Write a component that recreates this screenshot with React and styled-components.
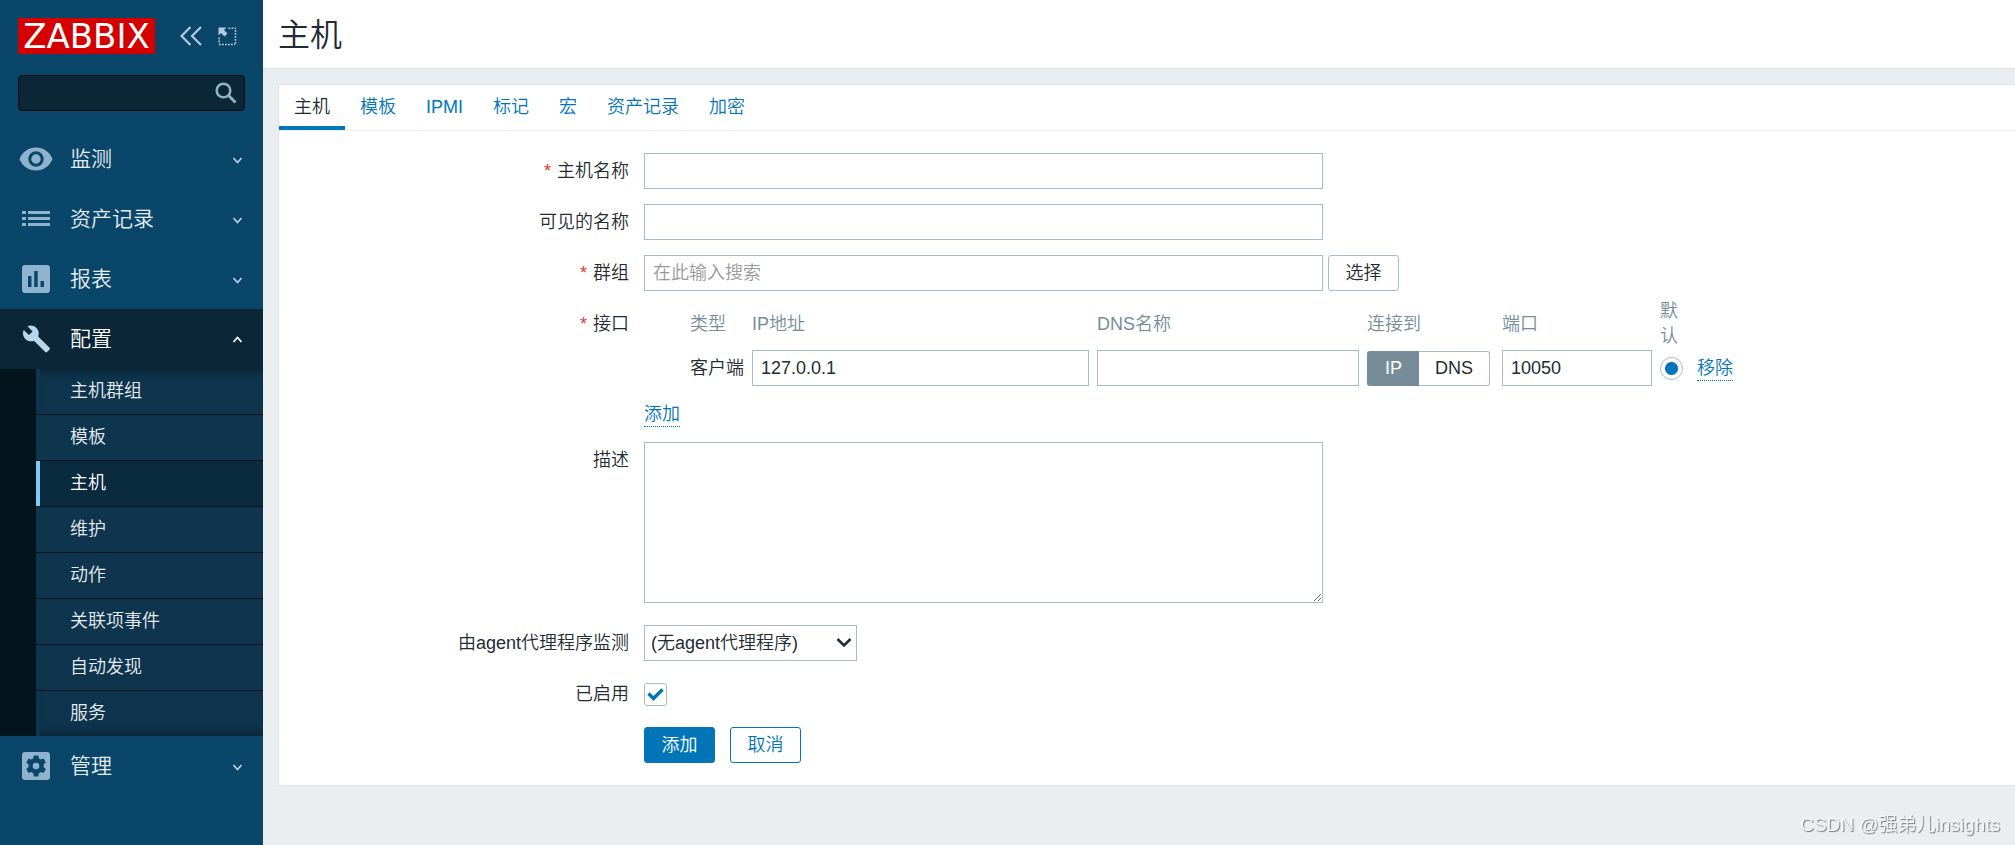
import React, { useState } from 'react'
import styled, { createGlobalStyle, css } from 'styled-components'

const GlobalStyle = createGlobalStyle`
    * {
        box-sizing: border-box;
    }

    body {
        margin: 0;
        background-color: #ebeef0;
        color: #1f2c33;
        font-family: "Liberation Sans", "Noto Sans CJK SC", sans-serif;
        font-size: 18px;
        font-weight: 350;
        line-height: 24px;
    }

    button,
    input,
    select,
    textarea {
        font: inherit;
        color: inherit;
    }
`

const Layout = styled.div`
    display: flex;
    min-height: 100vh;
`

const Sidebar = styled.aside`
    flex: 0 0 263px;
    min-width: 0;
    background-color: #0a466a;
`

const SidebarTop = styled.div`
    display: flex;
    align-items: center;
    padding: 18px 18px 0;
    color: #b3cbdc;
`

const Logo = styled.a`
    flex: none;
    width: 137px;
    margin-right: 25px;
    background-color: #d40000;
    color: #fff;
    font-family: "DejaVu Sans", sans-serif;
    font-size: 34px;
    font-weight: 400;
    line-height: 36px;
    text-align: center;
    text-decoration: none;
`

const IconButton = styled.button`
    display: flex;
    flex: none;
    padding: 0;
    border: none;
    background: none;
    color: inherit;
    cursor: pointer;

    & + & {
        margin-left: 15px;
    }
`

const Search = styled.form`
    display: flex;
    align-items: center;
    height: 36px;
    margin: 21px 18px 18px;
    padding-right: 7px;
    border: 1px solid #020a0f;
    border-radius: 4px;
    background-color: #0a2637;
    color: #8fb0c6;

    input {
        flex: 1;
        width: 100%;
        min-width: 0;
        padding: 0 9px;
        border: none;
        outline: none;
        background: none;
        color: #fff;
    }
`

const Menu = styled.ul`
    margin: 0;
    padding: 0;
    list-style: none;
`

const MenuLink = styled.a`
    display: grid;
    grid-template-columns: 36px 1fr 15px;
    align-items: center;
    column-gap: 16px;
    height: 60px;
    padding: 0 18px;
    color: #e6edf2;
    font-size: 21px;
    text-decoration: none;

    svg {
        justify-self: center;
        color: #8fb3cd;
    }

    svg:last-child {
        color: #bccfdb;
    }

    ${({ $open }) => $open && css`
        background-color: #0a2637;
        color: #fff;

        svg {
            color: #b8d6ec;
        }

        svg:last-child {
            color: #fff;
        }
    `}
`

const SubMenu = styled.ul`
    margin: 0;
    padding: 0 0 0 36px;
    list-style: none;
    background-color: #04141d;

    li + li {
        border-top: 1px solid #04141d;
    }

    li:first-child a {
        box-shadow: inset 0 9px 9px -6px #0a2637;
    }

    li:last-child a {
        box-shadow: inset 0 -9px 9px -6px #0a2637;
    }
`

const SubLink = styled.a`
    display: block;
    padding-left: 30px;
    border-left: 4px solid ${({ $active }) => ($active ? '#7ecbff' : '#0f344d')};
    background-color: ${({ $active }) => ($active ? '#0a2a3e' : '#0f344d')};
    color: ${({ $active }) => ($active ? '#fff' : '#e6edf2')};
    line-height: 45px;
    text-decoration: none;
`

const Main = styled.main`
    flex: 1;
    min-width: 0;
`

const PageHeader = styled.header`
    padding: 2px 15px 0;
    border-bottom: 1px solid #dfe4e7;
    background-color: #fff;

    h1 {
        margin: 0;
        font-size: 32px;
        font-weight: 350;
        line-height: 66px;
    }
`

const Card = styled.section`
    margin: 15px 0 0 15px;
    border: 1px solid #dfe4e7;
    border-right: none;
    background-color: #fff;
`

const Tabs = styled.nav`
    display: flex;
    border-bottom: 1px solid #ebeef0;
`

const Tab = styled.a`
    padding: 4px 15px 0;
    border-bottom: 4px solid ${({ $active }) => ($active ? '#0275b8' : 'transparent')};
    color: ${({ $active }) => ($active ? '#1f2c33' : '#0275b8')};
    line-height: 37px;
    text-decoration: none;
`

const Form = styled.form`
    display: flex;
    flex-direction: column;
    gap: 15px;
    padding: 22px 0;
`

const Row = styled.div`
    display: grid;
    grid-template-columns: 350px minmax(0, 1fr);
    column-gap: 15px;
    align-items: start;
`

// header cells are two lines tall, so this row sits closer to the one above
const InterfaceRow = styled(Row)`
    margin-top: -8px;

    > span {
        padding-top: 8px;
    }
`

const ProxyRow = styled(Row)`
    margin-top: 7px;
`

const AddLine = styled.div`
    padding-top: 16px;
`

const rowLabel = css`
    text-align: right;
    line-height: 36px;
`

const Label = styled.label`
    ${rowLabel}
`

const Caption = styled.span`
    ${rowLabel}
`

const Required = styled.span`
    margin-right: 6px;
    color: #e33734;
`

const Fields = styled.div`
    display: flex;
    align-items: center;
    gap: ${({ $gap }) => $gap || 5}px;
    min-height: 36px;
`

const field = css`
    border: 1px solid #acbbc2;
    border-radius: 0;
    outline: none;
    background-color: #fff;

    &:focus {
        border-color: #0275b8;
    }
`

const Input = styled.input`
    ${field}
    width: 100%;
    max-width: ${({ $width }) => $width || 679}px;
    height: 36px;
    padding: 0 8px;

    &::placeholder {
        color: #999;
        opacity: 1;
    }
`

const TextArea = styled.textarea`
    ${field}
    display: block;
    width: 100%;
    max-width: 679px;
    height: 161px;
    padding: 6px 8px;
    resize: vertical;
`

const SelectBox = styled.div`
    display: grid;
    align-items: center;

    select {
        ${field}
        grid-area: 1 / 1;
        appearance: none;
        width: 213px;
        height: 36px;
        padding: 0 30px 0 6px;
    }

    svg {
        grid-area: 1 / 1;
        justify-self: end;
        margin-right: 5px;
        pointer-events: none;
    }
`

const Button = styled.button`
    min-width: 71px;
    height: 36px;
    padding: 0 16px;
    border: 1px solid ${({ $kind }) => ($kind ? '#0275b8' : '#acbbc2')};
    border-radius: 3px;
    background-color: ${({ $kind }) => ($kind === 'primary' ? '#0275b8' : '#fff')};
    color: ${({ $kind }) => ($kind === 'primary' ? '#fff' : $kind ? '#0275b8' : '#1f2c33')};
    white-space: nowrap;
    cursor: pointer;
`

const LinkButton = styled.button`
    padding: 0;
    border: none;
    border-bottom: 1px dotted #0275b8;
    background: none;
    color: #0275b8;
    line-height: 24px;
    cursor: pointer;
`

const InterfaceTable = styled.table`
    border-collapse: collapse;
    margin-left: 46px;

    th {
        padding: 1px 8px 1px 0;
        color: #768d99;
        font-weight: 350;
        line-height: 25px;
        text-align: left;
    }

    td {
        height: 36px;
        padding: 0 8px 0 0;
        white-space: nowrap;
    }

    input {
        display: block;
    }
`

const Col = styled.col`
    width: ${({ $width }) => $width}px;
`

const Segmented = styled.div`
    display: flex;

    label {
        padding: 0 16px;
        border: 1px solid #acbbc2;
        border-left: none;
        border-radius: 0 3px 3px 0;
        line-height: 33px;
        cursor: pointer;
    }

    label:first-of-type {
        padding: 0 17px;
        border: 1px solid #acbbc2;
        border-right: none;
        border-radius: 3px 0 0 3px;
    }

    input {
        position: absolute;
        opacity: 0;
    }

    input:checked + label {
        border-color: #768d99;
        background-color: #768d99;
        color: #fff;
    }
`

const Radio = styled.input`
    appearance: none;
    width: 23px;
    height: 23px;
    margin: 0;
    border: 1px solid #acbbc2;
    border-radius: 50%;
    background-color: #fff;

    &:checked {
        background-image: radial-gradient(circle, #0275b8 6px, transparent 7px);
    }
`

const CheckBox = styled.div`
    display: grid;
    place-items: center;

    input {
        grid-area: 1 / 1;
        appearance: none;
        width: 23px;
        height: 23px;
        margin: 0;
        border: 1px solid #acbbc2;
        border-radius: 3px;
        background-color: #fff;
    }

    svg {
        grid-area: 1 / 1;
        visibility: hidden;
        pointer-events: none;
    }

    input:checked + svg {
        visibility: visible;
    }
`

const Watermark = styled.div`
    position: fixed;
    right: 15px;
    bottom: 8px;
    color: #f4f6f7;
    font-size: 19px;
    text-shadow: 1px 1px 1px #777;
`

const Svg = ({ size = 28, children }) => (
    <svg width={size} height={size} viewBox={`0 0 ${size} ${size}`} fill="currentColor" aria-hidden="true">
        {children}
    </svg>
)

const icons = {
    // eye
    monitoring: (
        <svg width="34" height="24" viewBox="0 0 34 24" fill="currentColor" aria-hidden="true">
            <path fillRule="evenodd" d="M17 .5C9.500.5 3.100 5.200.5 12c2.600 6.800 9 11.500 16.500 11.500S30.900 18.800 33.500 12C30.900 5.200 24.500.5 17 .5Zm0 19.200a7.700 7.700 0 1 1 0-15.400 7.700 7.700 0 0 1 0 15.400Zm0-3a4.700 4.700 0 1 0 0-9.400 4.700 4.700 0 0 0 0 9.400Z" />
        </svg>
    ),
    inventory: (
        <Svg>
            <path d="M0 6h4v3H0zM6 6h22v3H6zM0 12h4v3H0zM6 12h22v3H6zM0 18h4v3H0zM6 18h22v3H6z" />
        </Svg>
    ),
    reports: (
        <Svg>
            <path fillRule="evenodd" d="M3 0h22a3 3 0 0 1 3 3v22a3 3 0 0 1-3 3H3a3 3 0 0 1-3-3V3a3 3 0 0 1 3-3ZM6 11v11h3.500V11Zm6.200-5v16h3.500V6ZM18.500 16v6H22v-6Z" />
        </Svg>
    ),
    configuration: (
        <Svg>
            <path d="m27.600 22.800-11.400-11.400c1.100-2.900.5-6.200-1.800-8.500C12 .5 8.300 0 5.400 1.300l5.200 5.200L7 10.100 1.700 4.900C.3 7.800 1 11.500 3.300 13.900c2.300 2.300 5.700 2.900 8.600 1.800L23.200 27.100c.5.5 1.300.5 1.800 0l2.600-2.600c.5-.5.5-1.300 0-1.700Z" />
        </Svg>
    ),
    administration: (
        <Svg>
            <path fillRule="evenodd" d="M3 0h22a3 3 0 0 1 3 3v22a3 3 0 0 1-3 3H3a3 3 0 0 1-3-3V3a3 3 0 0 1 3-3Zm8.800 3.500-.5 2.800-2 1.200-2.700-1-2.300 3.900 2.200 1.900v2.900l-2.200 1.900 2.300 3.900 2.700-1 2 1.200.5 3.300h4.600l.5-3.300 2-1.200 2.700 1 2.300-3.900-2.200-1.900v-2.900l2.200-1.900-2.300-3.900-2.700 1-2-1.200-.5-2.800ZM14 10.700a3.300 3.300 0 1 1 0 6.600 3.300 3.300 0 0 1 0-6.600Z" />
        </Svg>
    ),
}

const Chevron = ({ up }) => (
    <svg width="9" height="9" viewBox="0 0 9 9" fill="none" stroke="currentColor" strokeWidth="1.700" aria-hidden="true">
        <path d={up ? 'M.5 7 4.500 2.500 8.500 7' : 'M.5 3 4.500 7.500 8.500 3'} />
    </svg>
)

const menu = [
    { id: 'monitoring', label: '监测' },
    { id: 'inventory', label: '资产记录' },
    { id: 'reports', label: '报表' },
    {
        id: 'configuration',
        label: '配置',
        items: ['主机群组', '模板', '主机', '维护', '动作', '关联项事件', '自动发现', '服务'],
    },
    { id: 'administration', label: '管理' },
]

const tabs = ['主机', '模板', 'IPMI', '标记', '宏', '资产记录', '加密']

const SideMenu = () => (
    <Sidebar>
        <SidebarTop>
            <Logo href="#">ZABBIX</Logo>
            <IconButton type="button" aria-label="收起菜单">
                <svg width="23" height="20" viewBox="0 0 23 20" fill="none" stroke="currentColor" strokeWidth="2.200" aria-hidden="true">
                    <path d="m10.500 1-9 9 9 9M21 1l-9 9 9 9" />
                </svg>
            </IconButton>
            <IconButton type="button" aria-label="隐藏菜单">
                <svg width="19" height="19" viewBox="0 0 19 19" fill="none" stroke="currentColor" aria-hidden="true">
                    <path d="M.5.500h8L6 3l3.500 3.500-3 3L3 6 .5 8.500Z" fill="currentColor" stroke="none" />
                    <path d="M10.500 1.200H18M17.500 3v15M1 17.500h16M1.200 10.500V17" strokeWidth="1.600" strokeDasharray="1.800 1.200" />
                </svg>
            </IconButton>
        </SidebarTop>

        <Search>
            <input type="text" aria-label="搜索" />
            <IconButton type="button" aria-label="搜索">
                <svg width="22" height="22" viewBox="0 0 22 22" fill="none" stroke="currentColor" aria-hidden="true">
                    <circle cx="8.500" cy="8.500" r="6.800" strokeWidth="2.600" />
                    <path d="m13.500 13.500 7 7" strokeWidth="3" />
                </svg>
            </IconButton>
        </Search>

        <Menu>
            {menu.map(({ id, label, items }) => (
                <li key={id}>
                    <MenuLink href="#" $open={!!items}>
                        {icons[id]}
                        <span>{label}</span>
                        <Chevron up={!!items} />
                    </MenuLink>
                    {items && (
                        <SubMenu>
                            {items.map((item) => (
                                <li key={item}>
                                    <SubLink href="#" $active={item === '主机'}>{item}</SubLink>
                                </li>
                            ))}
                        </SubMenu>
                    )}
                </li>
            ))}
        </Menu>
    </Sidebar>
)

const Interfaces = () => {
    const [connect, setConnect] = useState('ip')

    return (
        <InterfaceTable>
            <colgroup>
                <Col $width={62} />
                <Col $width={345} />
                <Col $width={270} />
                <Col $width={135} />
                <Col $width={158} />
                <Col $width={37} />
                <Col $width={44} />
            </colgroup>
            <thead>
                <tr>
                    <th>类型</th>
                    <th>IP地址</th>
                    <th>DNS名称</th>
                    <th>连接到</th>
                    <th>端口</th>
                    <th>默<br />认</th>
                    <th></th>
                </tr>
            </thead>
            <tbody>
                <tr>
                    <td>客户端</td>
                    <td><Input type="text" aria-label="IP地址" defaultValue="127.0.0.1" $width={337} /></td>
                    <td><Input type="text" aria-label="DNS名称" $width={262} /></td>
                    <td>
                        <Segmented>
                            <input type="radio" id="use-ip" name="useip" checked={connect === 'ip'} onChange={() => setConnect('ip')} />
                            <label htmlFor="use-ip">IP</label>
                            <input type="radio" id="use-dns" name="useip" checked={connect === 'dns'} onChange={() => setConnect('dns')} />
                            <label htmlFor="use-dns">DNS</label>
                        </Segmented>
                    </td>
                    <td><Input type="text" aria-label="端口" defaultValue="10050" $width={150} /></td>
                    <td><Radio type="radio" name="main" aria-label="默认" defaultChecked /></td>
                    <td><LinkButton type="button">移除</LinkButton></td>
                </tr>
            </tbody>
        </InterfaceTable>
    )
}

const HostForm = () => (
    <Form>
        <Row>
            <Label htmlFor="host"><Required>*</Required>主机名称</Label>
            <Input id="host" type="text" />
        </Row>
        <Row>
            <Label htmlFor="visible-name">可见的名称</Label>
            <Input id="visible-name" type="text" />
        </Row>
        <Row>
            <Label htmlFor="groups"><Required>*</Required>群组</Label>
            <Fields>
                <Input id="groups" type="text" placeholder="在此输入搜索" />
                <Button type="button">选择</Button>
            </Fields>
        </Row>
        <InterfaceRow>
            <Caption><Required>*</Required>接口</Caption>
            <div>
                <Interfaces />
                <AddLine>
                    <LinkButton type="button">添加</LinkButton>
                </AddLine>
            </div>
        </InterfaceRow>
        <Row>
            <Label htmlFor="description">描述</Label>
            <TextArea id="description" />
        </Row>
        <ProxyRow>
            <Label htmlFor="proxy">由agent代理程序监测</Label>
            <Fields>
                <SelectBox>
                    <select id="proxy">
                        <option>(无agent代理程序)</option>
                    </select>
                    <svg width="16" height="10" viewBox="0 0 16 10" fill="none" stroke="#1f2c33" strokeWidth="2.500" aria-hidden="true">
                        <path d="m1.500 1 6.500 6.500L14.500 1" />
                    </svg>
                </SelectBox>
            </Fields>
        </ProxyRow>
        <Row>
            <Label htmlFor="enabled">已启用</Label>
            <Fields>
                <CheckBox>
                    <input id="enabled" type="checkbox" defaultChecked />
                    <svg width="17" height="13" viewBox="0 0 17 13" fill="none" stroke="#0275b8" strokeWidth="3.400" aria-hidden="true">
                        <path d="m1.500 5.500 5 5 9-9" />
                    </svg>
                </CheckBox>
            </Fields>
        </Row>
        <Row>
            <span />
            <Fields $gap={15}>
                <Button type="submit" $kind="primary">添加</Button>
                <Button type="button" $kind="outline">取消</Button>
            </Fields>
        </Row>
    </Form>
)

const App = () => (
    <>
        <GlobalStyle />
        <Layout>
            <SideMenu />
            <Main>
                <PageHeader>
                    <h1>主机</h1>
                </PageHeader>
                <Card>
                    <Tabs>
                        {tabs.map((tab, i) => (
                            <Tab key={tab} href="#" $active={i === 0}>{tab}</Tab>
                        ))}
                    </Tabs>
                    <HostForm />
                </Card>
            </Main>
        </Layout>
        <Watermark>CSDN @强弟儿insights</Watermark>
    </>
)

export default App
